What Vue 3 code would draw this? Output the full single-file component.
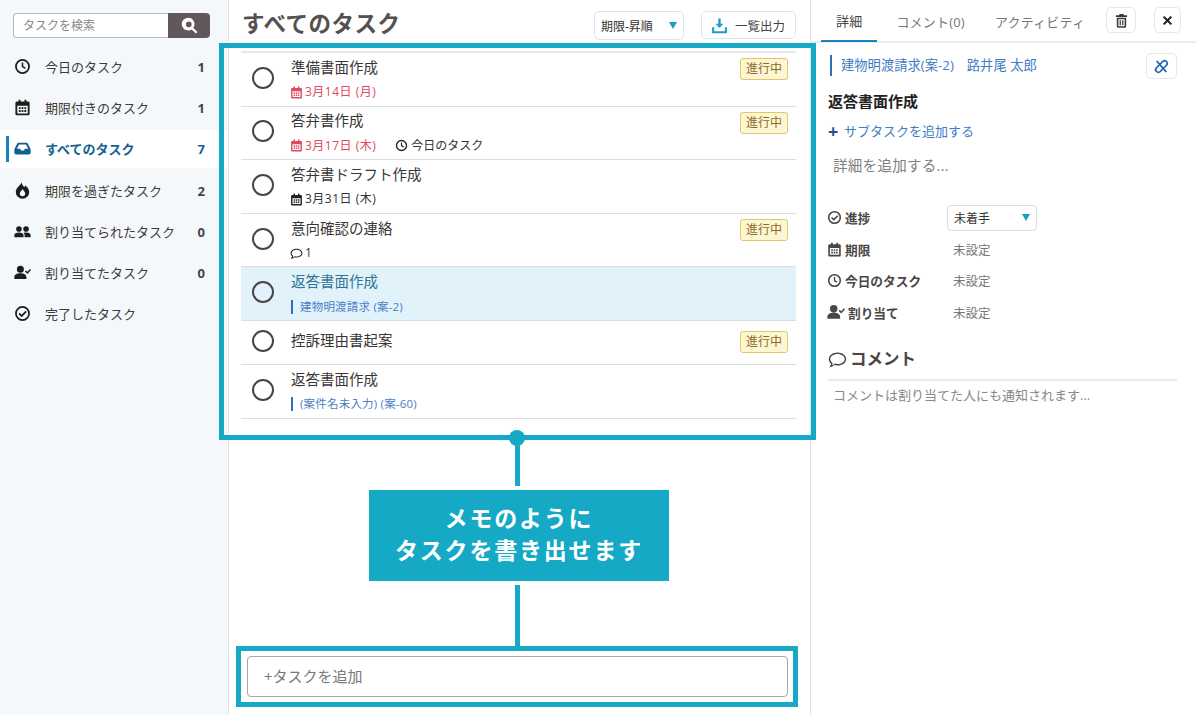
<template>
  <div class="page">
    <!-- 左メニュー -->
    <aside class="sidebar">
      <div class="search">
        <input class="search-input" placeholder="タスクを検索" />
        <button class="search-btn">
          <svg viewBox="0 0 24 24" class="search-icon"><path fill-rule="evenodd" :d="icons.search" /></svg>
        </button>
      </div>
      <nav class="menu">
        <div v-for="m in menu" :key="m.label" class="menu-item" :class="{ active: m.active }">
          <svg viewBox="0 0 24 24" class="menu-icon"><path fill-rule="evenodd" :d="icons[m.icon]" /></svg>
          <span class="menu-label">{{ m.label }}</span>
          <span class="menu-count">{{ m.count }}</span>
        </div>
      </nav>
    </aside>

    <!-- タスク一覧 -->
    <main class="main">
      <header class="main-header">
        <h1 class="main-title">すべてのタスク</h1>
        <div class="sort">期限-昇順<i class="caret"></i></div>
        <button class="export">
          <svg viewBox="0 0 24 24" class="export-icon"><path fill-rule="evenodd" :d="icons.download" /></svg>
          一覧出力
        </button>
      </header>

      <div class="task-list">
        <div v-for="(t, i) in tasks" :key="i" class="task" :class="{ selected: t.selected, short: !t.meta }">
          <span class="circle"></span>
          <div class="task-body">
            <div class="task-title">{{ t.title }}</div>
            <div v-if="t.meta" class="task-meta" :class="t.meta">
              <template v-if="t.meta === 'due' || t.meta === 'late'">
                <svg viewBox="0 0 24 24" class="meta-icon"><path fill-rule="evenodd" :d="icons.calendar" /></svg>
                <span>{{ t.date }}</span>
                <span v-if="t.today" class="today">
                  <svg viewBox="0 0 24 24" class="meta-icon"><path fill-rule="evenodd" :d="icons.clock" /></svg>
                  今日のタスク
                </span>
              </template>
              <template v-else-if="t.meta === 'comment'">
                <svg viewBox="0 0 24 24" class="meta-icon"><path fill-rule="evenodd" :d="icons.comment" /></svg>
                <span>1</span>
              </template>
              <template v-else>
                <i class="case-bar"></i>
                <span>{{ t.caseName }}</span>
              </template>
            </div>
          </div>
          <span v-if="t.badge" class="badge">進行中</span>
        </div>
      </div>

      <div class="add-wrap">
        <input class="add-input" placeholder="+タスクを追加" />
      </div>
    </main>

    <!-- 詳細パネル -->
    <section class="detail">
      <div class="tabs">
        <span class="tab current">詳細</span>
        <span class="tab">コメント(0)</span>
        <span class="tab">アクティビティ</span>
        <button class="icon-btn trash">
          <svg viewBox="0 0 24 24"><path fill-rule="evenodd" :d="icons.trash" /></svg>
        </button>
        <button class="icon-btn close">
          <svg viewBox="0 0 24 24"><path :d="icons.close" /></svg>
        </button>
      </div>
      <div class="detail-body">
        <div class="case-row">
          <i class="case-line"></i>
          <span class="case-name">建物明渡請求(案-2)</span>
          <span class="case-client">路井尾 太郎</span>
          <button class="icon-btn unlink">
            <svg viewBox="0 0 24 24"><path fill="none" stroke-width="2.8" stroke-linecap="round" stroke-linejoin="round" :d="icons.unlink" /></svg>
          </button>
        </div>
        <h2 class="detail-title">返答書面作成</h2>
        <div class="subtask"><b>+</b>サブタスクを追加する</div>
        <div class="description">詳細を追加する...</div>

        <div class="props">
          <div v-for="p in props" :key="p.label" class="prop">
            <div class="prop-label">
              <svg viewBox="0 0 24 24" :class="p.icon"><path fill-rule="evenodd" :d="icons[p.icon]" /></svg>
              <span>{{ p.label }}</span>
            </div>
            <div v-if="p.select" class="status">未着手<i class="caret"></i></div>
            <div v-else class="prop-value">未設定</div>
          </div>
        </div>

        <div class="comment-head">
          <svg viewBox="0 0 24 24"><path fill-rule="evenodd" :d="icons.comment" /></svg>
          <span>コメント</span>
        </div>
        <div class="comment-hint">コメントは割り当てた人にも通知されます...</div>
      </div>
    </section>

    <!-- 説明の注釈 -->
    <div class="frame frame-list"></div>
    <i class="dot"></i>
    <i class="line line-top"></i>
    <div class="callout">メモのように<br />タスクを書き出せます</div>
    <i class="line line-bottom"></i>
    <div class="frame frame-add"></div>
  </div>
</template>

<script setup>
const icons = {
  search: 'M10 1a9 9 0 0 1 7.300 14.300l5.900 5.900-2.200 2.200-5.900-5.900A9 9 0 1 1 10 1zM11 6.500a4 4 0 1 0 0 8 4 4 0 0 0 0-8z',
  clock: 'M12 1.500a10.500 10.500 0 1 1 0 21 10.500 10.500 0 0 1 0-21zM12 4a8 8 0 1 0 0 16 8 8 0 0 0 0-16zM10.900 6.500h2.200v5.100l3.600 2.100-1.100 1.900-4.700-2.800z',
  calendar: 'M6.500 1h2.700v2.500h5.600V1h2.700v2.500H20a2 2 0 0 1 2 2V21a2 2 0 0 1-2 2H4a2 2 0 0 1-2-2V5.500a2 2 0 0 1 2-2h2.500zM4.600 9.500v11h14.800v-11zM6.800 11.500h2.600v2.600H6.800zM10.700 11.500h2.600v2.600h-2.600zM14.600 11.500h2.600v2.600h-2.600zM6.800 15.700h2.600v2.600H6.800zM10.700 15.700h2.600v2.600h-2.600zM14.600 15.700h2.600v2.600h-2.600z',
  inbox: 'M6.500 4h11c.8 0 1.500.4 1.900 1.100L23.500 13v5a2.500 2.500 0 0 1-2.500 2.500H3A2.500 2.500 0 0 1 .5 18v-5l4.100-7.900C5 4.400 5.700 4 6.500 4zM7 6.500l-3 6h4.800l1 2.200h4.400l1-2.200H20l-3-6z',
  fire: 'M10.500.5c.6 3.500 2.800 5 3.900 7 .7-.8 1.100-1.800 1.200-3C19 7 21.500 10.500 21.500 14.200a9.500 9.500 0 0 1-19 0c0-4 2.600-6.200 4.800-8.800C8.900 3.800 10.100 2.500 10.500.5zM12 10c-.7 2.300-3.800 3.500-3.800 6.200a3.800 3.800 0 0 0 7.600 0C15.800 13.500 12.700 12.300 12 10z',
  users: 'M7 4.500a4 4 0 1 1 0 8 4 4 0 0 1 0-8zM17 4.500a4 4 0 1 1 0 8 4 4 0 0 1 0-8zM.5 20v-2.800c0-2.400 2.400-3.700 6.500-3.700s6.500 1.300 6.500 3.700V20zM15 20v-2.800c0-1.500-.5-2.700-1.500-3.500 1-.2 2.200-.3 3.500-.3 4.200 0 6.500 1.300 6.500 3.800V20z',
  userCheck: 'M9 2.500a5 5 0 1 1 0 10 5 5 0 0 1 0-10zM.5 21v-2.500c0-3.500 3.500-5.500 8.500-5.500s8.500 2 8.500 5.500V21zM15.500 10.500l1.500-1.500 2 2 3.500-4 1.500 1.300-5 5.700z',
  check: 'M12 1.500a10.500 10.500 0 1 1 0 21 10.500 10.500 0 0 1 0-21zM12 4a8 8 0 1 0 0 16 8 8 0 0 0 0-16zM16.300 8.200l1.800 1.800-7.300 7.200-4.500-4.400 1.800-1.800 2.700 2.700z',
  download: 'M10.300 2h3.400v7.500h3.800L12 15.500l-5.500-6h3.800zM1.500 14.500h3V20h15v-5.500h3V23h-21z',
  trash: 'M9 1.500h6l1 2h5v2.800H3V3.500h5zM4.500 7.500h15V21a2.500 2.500 0 0 1-2.500 2.500H7A2.500 2.500 0 0 1 4.500 21zM7 10v11h10V10zM9 11.500h2v8H9zM13 11.500h2v8h-2z',
  close: 'M6.200 3.500L12 9.300l5.800-5.800 2.700 2.700-5.800 5.800 5.800 5.800-2.700 2.700-5.800-5.800-5.800 5.800-2.700-2.700 5.800-5.800-5.800-5.800z',
  unlink: 'M10 8l4-4a4.200 4.200 0 0 1 6 6l-4 4M14 16l-4 4a4.200 4.200 0 0 1-6-6l4-4M5 4l14 16',
  comment: 'M12 3c6.100 0 11 3.700 11 8.300s-4.900 8.300-11 8.300c-1.300 0-2.500-.2-3.700-.5C6.700 20.700 4.500 21.800 1.500 22c1.200-1.400 2-3 2.300-4.700C2 15.800 1 13.700 1 11.300 1 6.700 5.900 3 12 3zM12 4.900c-5.200 0-9.100 3-9.100 6.400 0 2 1.200 3.800 3 5-.1 1.200-.4 2.200-.9 3.200 1.300-.5 2.500-1.300 3.500-2.400 1.100.4 2.300.6 3.500.6 5.200 0 9.100-3 9.100-6.400S17.200 4.900 12 4.900z',
}

const menu = [
  { icon: 'clock', label: '今日のタスク', count: 1 },
  { icon: 'calendar', label: '期限付きのタスク', count: 1 },
  { icon: 'inbox', label: 'すべてのタスク', count: 7, active: true },
  { icon: 'fire', label: '期限を過ぎたタスク', count: 2 },
  { icon: 'users', label: '割り当てられたタスク', count: 0 },
  { icon: 'userCheck', label: '割り当てたタスク', count: 0 },
  { icon: 'check', label: '完了したタスク', count: '' },
]

const tasks = [
  { title: '準備書面作成', meta: 'late', date: '3月14日 (月)', badge: true },
  { title: '答弁書作成', meta: 'late', date: '3月17日 (木)', today: true, badge: true },
  { title: '答弁書ドラフト作成', meta: 'due', date: '3月31日 (木)' },
  { title: '意向確認の連絡', meta: 'comment', badge: true },
  { title: '返答書面作成', meta: 'case', caseName: '建物明渡請求 (案-2)', selected: true },
  { title: '控訴理由書起案', badge: true },
  { title: '返答書面作成', meta: 'case', caseName: '(案件名未入力) (案-60)' },
]

const props = [
  { icon: 'check', label: '進捗', select: true },
  { icon: 'calendar', label: '期限' },
  { icon: 'clock', label: '今日のタスク' },
  { icon: 'userCheck', label: '割り当て' },
]
</script>

<style>
body {
  margin: 0;
  background: #fff;
}
</style>

<style scoped>
.page {
  position: relative;
  display: flex;
  width: 1196px;
  height: 715px;
  overflow: hidden;
  background: #fff;
  color: #3d3a3a;
  font-family: "Open Sans", "Noto Sans CJK JP", sans-serif;
}

button {
  font-family: inherit;
  cursor: pointer;
}

/* 左メニュー */
.sidebar {
  box-sizing: border-box;
  flex: 0 0 229px;
  padding-top: 13px;
  background: #f5f8fa;
  border-right: 1px solid #dde3e7;
}

.search {
  display: flex;
  width: 197px;
  height: 25px;
  margin-left: 13px;
}

.search-input {
  box-sizing: border-box;
  flex: 1;
  min-width: 0;
  padding: 0 9px;
  border: 1px solid #b9b9b9;
  border-right: none;
  border-radius: 4px 0 0 4px;
  background: #fff;
  font: 12px "Open Sans", "Noto Sans CJK JP", sans-serif;
  outline: none;
}

.search-input::placeholder {
  color: #888;
}

.search-btn {
  display: flex;
  align-items: center;
  justify-content: center;
  width: 42px;
  padding: 0;
  border: none;
  border-radius: 0 4px 4px 0;
  background: #62575a;
}

.search-icon {
  width: 17px;
  height: 17px;
  fill: #fff;
}

.menu {
  margin-top: 8px;
}

.menu-item {
  position: relative;
  display: flex;
  align-items: center;
  height: 41px;
  padding: 0 23px 0 13.500px;
  font-size: 13px;
  color: #3f3a3a;
}

.menu-item.active {
  color: #135f92;
  font-weight: 700;
  background: #fff;
  height: 38px;
  margin: 1.500px 0 2.500px;
}

.menu-item.active::before {
  content: "";
  position: absolute;
  left: 6px;
  top: 6px;
  bottom: 6px;
  width: 3px;
  background: #1a83bd;
}

.menu-icon {
  flex: none;
  width: 17px;
  height: 17px;
  margin-right: 14.500px;
  fill: #1c1c1c;
}

.active .menu-icon {
  fill: #135f92;
}

.menu-label {
  flex: 1;
}

.menu-count {
  font-weight: 700;
  color: #444;
}

.active .menu-count {
  color: #135f92;
}

/* タスク一覧 */
.main {
  box-sizing: border-box;
  display: flex;
  flex-direction: column;
  flex: 0 0 582px;
  height: 715px;
  border-right: 1px solid #dde3e7;
}

.main-header {
  box-sizing: border-box;
  display: flex;
  align-items: flex-start;
  height: 51px;
  padding: 11px 14px 0 14px;
}

.main-title {
  flex: 1;
  margin: -3px 0 0 -1px;
  font-size: 22.500px;
  line-height: 31px;
  font-weight: 700;
  letter-spacing: 0.500px;
  color: #555051;
}

.sort {
  box-sizing: border-box;
  display: flex;
  align-items: center;
  justify-content: space-between;
  width: 90px;
  height: 29px;
  margin-right: 17px;
  padding: 0 5px 0 6px;
  border: 1px solid #dfe5ea;
  border-radius: 5px;
  font-size: 12px;
  color: #333;
}

.caret {
  width: 0;
  height: 0;
  margin-right: 1px;
  border-left: 4.500px solid transparent;
  border-right: 4.500px solid transparent;
  border-top: 7px solid #17a0bf;
}

.export {
  box-sizing: border-box;
  display: flex;
  align-items: center;
  gap: 7px;
  width: 95px;
  height: 28px;
  padding: 0 0 0 9px;
  background: #fff;
  border: 1px solid #dfe5ea;
  border-radius: 5px;
  font-size: 12.500px;
  color: #444;
}

.export-icon {
  width: 17px;
  height: 17px;
  fill: #17a0c4;
}

.task-list {
  margin: 0 14px 0 12px;
  border-top: 2px solid #e6e8ea;
}

.task {
  box-sizing: border-box;
  display: flex;
  align-items: center;
  height: 53.600px;
  padding: 0 8px 3px 11px;
  border-bottom: 1px solid #dcdfe1;
}

.task.short {
  height: 44px;
  padding-bottom: 2px;
}

.task.selected {
  background: #e2f2fb;
}

.circle {
  flex: none;
  box-sizing: border-box;
  width: 22px;
  height: 22px;
  margin-right: 17px;
  border: 2px solid #4b4344;
  border-radius: 50%;
}

.task-body {
  flex: 1;
  min-width: 0;
  margin-top: 2.500px;
}

.short .task-body {
  margin-top: 0;
}

.task-title {
  font-size: 14.500px;
  line-height: 20px;
  color: #3a3636;
}

.selected .task-title {
  color: #2f7596;
}

.task-meta {
  display: flex;
  align-items: center;
  gap: 2px;
  margin-top: 6.500px;
  font-size: 12px;
  line-height: 16px;
  letter-spacing: 0.500px;
  color: #333;
}

.task-meta.late {
  color: #e0485c;
}

.task-meta.late > .meta-icon {
  fill: #e0485c;
}

.task-meta.case {
  color: #4a80c6;
  font-size: 11.500px;
  letter-spacing: 0.200px;
}

.meta-icon {
  flex: none;
  width: 13px;
  height: 13px;
  margin-left: -1px;
  fill: #222;
}

.today {
  display: flex;
  align-items: center;
  gap: 3px;
  margin-left: 18px;
  letter-spacing: 0;
  color: #333;
}

.case-bar {
  width: 2px;
  height: 14px;
  margin-right: 5px;
  background: #2f6fc0;
}

.badge {
  box-sizing: border-box;
  flex: none;
  align-self: flex-start;
  height: 22px;
  margin-top: 5px;
  padding: 0 5px;
  background: #fdf6d3;
  border: 1px solid #e2c766;
  border-radius: 3px;
  font-size: 12px;
  line-height: 20px;
  color: #8b6a2c;
}

.short .badge {
  margin-top: 10px;
}

.add-wrap {
  margin-top: auto;
  padding: 0 22px 18px 18px;
}

.add-input {
  box-sizing: border-box;
  display: block;
  width: 100%;
  height: 41px;
  padding: 0 16px 2px;
  border: 1.500px solid #a6a6a6;
  border-radius: 4px;
  background: #fff;
  font: 15px "Open Sans", "Noto Sans CJK JP", sans-serif;
  outline: none;
}

.add-input::placeholder {
  color: #777;
}

/* 詳細パネル */
.detail {
  flex: 1;
  min-width: 0;
}

.tabs {
  box-sizing: border-box;
  position: relative;
  display: flex;
  align-items: flex-end;
  height: 43px;
  padding-left: 10px;
  border-bottom: 2px solid #e8ecef;
}

.tab {
  padding: 0 15px 8px;
  height: 22px;
  font-size: 13px;
  line-height: 22px;
  letter-spacing: 0.200px;
  color: #777;
}

.tab.current {
  color: #444;
  margin-right: 4px;
  margin-bottom: -1px;
  border-bottom: 2px solid #1a83bd;
}

.icon-btn {
  box-sizing: border-box;
  display: flex;
  align-items: center;
  justify-content: center;
  padding: 0;
  background: #fff;
  border: 1px solid #e2e7eb;
  border-radius: 5px;
}

.icon-btn svg {
  width: 15px;
  height: 15px;
}

.trash {
  position: absolute;
  left: 295px;
  top: 7px;
  width: 30px;
  height: 26px;
  fill: #3a3a3a;
}

.close {
  position: absolute;
  left: 343px;
  top: 7px;
  width: 27px;
  height: 26px;
  fill: #222;
}

.close svg {
  width: 13px;
  height: 13px;
}

.detail-body {
  padding: 10px 19px 0 17px;
}

.case-row {
  display: flex;
  align-items: center;
  height: 26px;
  padding-left: 2px;
  font-size: 13.300px;
  color: #3f7cc4;
}

.case-line {
  width: 2px;
  height: 21px;
  margin: 0 9px 2px 0;
  background: #2f6fc0;
}

.case-name {
  margin-right: 13px;
  padding-bottom: 4px;
}

.case-client {
  flex: 1;
  padding-bottom: 4px;
}

.unlink {
  width: 31px;
  height: 26px;
  stroke: #1e5fb8;
}

.detail-title {
  margin: 9px 0 0;
  font-size: 15px;
  line-height: 26px;
  font-weight: 700;
  color: #222;
}

.subtask {
  display: flex;
  align-items: center;
  margin-top: 5px;
  font-size: 13px;
  line-height: 24px;
  color: #3f7cc4;
}

.subtask b {
  width: 16px;
  font-size: 18px;
  line-height: 24px;
  color: #1f4f9c;
}

.description {
  margin-top: 12px;
  padding-left: 5px;
  font-size: 14.500px;
  line-height: 22px;
  letter-spacing: 0.300px;
  color: #808080;
}

.props {
  margin-top: 25px;
}

.prop {
  display: flex;
  align-items: center;
  height: 31.500px;
}

.prop-label {
  display: flex;
  align-items: center;
  gap: 3px;
  width: 125px;
  font-size: 12.700px;
  font-weight: 700;
  color: #4a4545;
}

.prop-label svg {
  flex: none;
  width: 15px;
  height: 15px;
  margin-left: -1px;
  fill: #4a4545;
}

.prop-label svg.userCheck {
  width: 18px;
  height: 18px;
}

.status {
  box-sizing: border-box;
  display: flex;
  align-items: center;
  justify-content: space-between;
  width: 90px;
  height: 26px;
  margin-left: -6px;
  padding: 0 5px 0 6px;
  border: 1px solid #d5e0e8;
  border-radius: 4px;
  font-size: 12px;
  color: #333;
}

.prop-value {
  font-size: 12.500px;
  color: #777;
}

.comment-head {
  display: flex;
  align-items: center;
  gap: 3px;
  margin-top: 19px;
  padding-bottom: 8px;
  border-bottom: 2px solid #e8ebed;
  font-size: 16.500px;
  line-height: 24px;
  font-weight: 700;
  color: #4a4545;
}

.comment-head svg {
  width: 19px;
  height: 19px;
  fill: #4a4545;
}

.comment-hint {
  margin-top: 4px;
  padding-left: 5px;
  font-size: 13px;
  line-height: 20px;
  color: #888;
}

/* 説明の注釈 */
.frame {
  box-sizing: border-box;
  position: absolute;
  border: 5px solid #15a9c6;
  pointer-events: none;
}

.frame-list {
  left: 219px;
  top: 43px;
  width: 597px;
  height: 397px;
}

.frame-add {
  left: 236px;
  top: 646px;
  width: 562px;
  height: 61px;
}

.dot {
  position: absolute;
  left: 509px;
  top: 430px;
  width: 16px;
  height: 16px;
  border-radius: 50%;
  background: #15a9c6;
}

.line {
  position: absolute;
  left: 515px;
  width: 5px;
  background: #15a9c6;
}

.line-top {
  top: 440px;
  height: 46px;
}

.line-bottom {
  top: 585px;
  height: 61px;
}

.callout {
  box-sizing: border-box;
  position: absolute;
  left: 369px;
  top: 490px;
  width: 300px;
  height: 91px;
  padding-top: 13px;
  background: #15a9c6;
  color: #fff;
  font-size: 23px;
  font-weight: 700;
  line-height: 31.500px;
  letter-spacing: 1.800px;
  text-align: center;
}
</style>
